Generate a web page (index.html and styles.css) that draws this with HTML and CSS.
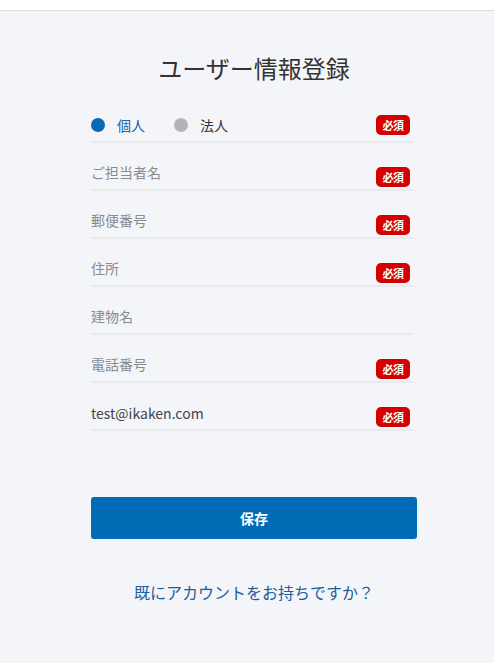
FILE: index.html
```html
<!DOCTYPE html>
<html lang="ja">
<head>
<meta charset="utf-8">
<title>ユーザー情報登録</title>
<link rel="stylesheet" href="styles.css">
</head>
<body>
<div class="topbar"></div>
<main class="main">
  <h1 class="title">ユーザー情報登録</h1>
  <div class="row radio-row">
    <label class="radio radio-on"><span class="dot"></span>個人</label>
    <label class="radio radio-off"><span class="dot"></span>法人</label>
    <span class="badge">必須</span>
  </div>
  <div class="row field"><span class="ph">ご担当者名</span><span class="badge">必須</span></div>
  <div class="row field"><span class="ph">郵便番号</span><span class="badge">必須</span></div>
  <div class="row field"><span class="ph">住所</span><span class="badge">必須</span></div>
  <div class="row field"><span class="ph">建物名</span></div>
  <div class="row field"><span class="ph">電話番号</span><span class="badge">必須</span></div>
  <div class="row field"><span class="ph val">test@ikaken.com</span><span class="badge">必須</span></div>
  <button class="save">保存</button>
  <a class="login" href="#">既にアカウントをお持ちですか？</a>
</main>
</body>
</html>
```
FILE: styles.css
```css
html, body {
  margin: 0;
  padding: 0;
}
body {
  background: #f4f5f9;
  font-family: "Noto Sans CJK JP", "Noto Sans", sans-serif;
  height: 663px;
  border-right: 1px solid #fff;
  box-sizing: border-box;
}
.topbar {
  height: 10px;
  background: #fff;
  border-bottom: 1px solid #dcdde2;
}
.main {
  margin-left: 91px;
  width: 326px;
  display: flex;
  flex-direction: column;
}
.title {
  margin: 41px 0 0;
  font-size: 24px;
  line-height: 32px;
  font-weight: 400;
  color: #333;
  text-align: center;
}
.row {
  width: 322px;
  box-sizing: border-box;
  padding-right: 3px;
  border-bottom: 2px solid #e9eaee;
  display: flex;
}
.radio-row {
  margin-top: 31px;
  align-items: center;
  padding-bottom: 6px;
  height: 28px;
}
.radio {
  display: flex;
  align-items: center;
  font-size: 14px;
  line-height: 20px;
}
.dot {
  width: 14px;
  height: 14px;
  border-radius: 50%;
  margin-right: 12px;
}
.radio-on {
  color: #1b62a6;
  margin-right: 29px;
}
.radio-on .dot { background: #0a69b4; }
.radio-off { color: #333; }
.radio-off .dot { background: #b4b4b6; }
.badge {
  margin-left: auto;
  width: 34px;
  height: 20px;
  border-radius: 5px;
  background: #d50000;
  color: #fff;
  font-size: 11px;
  font-weight: 700;
  line-height: 20px;
  text-align: center;
  letter-spacing: -0.5px;
}
.field {
  height: 48px;
  align-items: flex-end;
  padding-bottom: 2px;
}
.ph {
  font-size: 14px;
  line-height: 20px;
  color: #878b92;
  margin-bottom: 5px;
}
.val {
  color: #41464d;
  margin-bottom: 4px;
}
.save {
  margin-top: 66px;
  width: 326px;
  height: 42px;
  border: none;
  border-radius: 3px;
  background: #006cb6;
  color: #fff;
  font-family: inherit;
  font-size: 14px;
  font-weight: 700;
}
.login {
  margin-top: 41px;
  text-align: center;
  font-size: 16px;
  line-height: 24px;
  color: #1a5e9e;
  text-decoration: none;
}
```
